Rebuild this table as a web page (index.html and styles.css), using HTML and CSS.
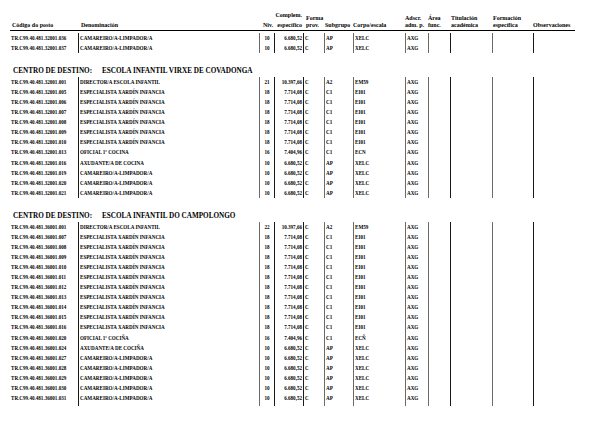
FILE: index.html
```html
<!DOCTYPE html>
<html lang="gl">
<head>
<meta charset="utf-8">
<title>Relación de postos</title>
<link rel="stylesheet" href="styles.css">
</head>
<body>
<div class="page">
  <div class="head">
    <div class="h h1"><span>Código do posto</span></div>
    <div class="h h2"><span>Denominación</span></div>
    <div class="h h3"><span>Niv.</span></div>
    <div class="h h4"><span>Complem.</span><span>específico</span></div>
    <div class="h h5"><span>Forma</span><span>prov.</span></div>
    <div class="h h6"><span>Subgrupo</span></div>
    <div class="h h7"><span>Corpo/escala</span></div>
    <div class="h h8"><span>Adscr.</span><span>adm. p.</span></div>
    <div class="h h9"><span>Área</span><span>func.</span></div>
    <div class="h h10"><span>Titulación</span><span>académica</span></div>
    <div class="h h11"><span>Formación</span><span>específica</span></div>
    <div class="h h12"><span>Observaciones</span></div>
  </div>

  <div class="rows first">
    <div class="row"><div class="c c1">TR.C99.40.481.32001.036</div><div class="c c2">CAMAREIRO/A-LIMPADOR/A</div><div class="c c3">10</div><div class="c c4">6.680,52</div><div class="c c5">C</div><div class="c c6">AP</div><div class="c c7">XELC</div><div class="c c8">AXG</div><div class="c c9"></div><div class="c c10"></div><div class="c c11"></div><div class="c c12"></div></div>
    <div class="row"><div class="c c1">TR.C99.40.481.32001.037</div><div class="c c2">CAMAREIRO/A-LIMPADOR/A</div><div class="c c3">10</div><div class="c c4">6.680,52</div><div class="c c5">C</div><div class="c c6">AP</div><div class="c c7">XELC</div><div class="c c8">AXG</div><div class="c c9"></div><div class="c c10"></div><div class="c c11"></div><div class="c c12"></div></div>
  </div>

  <div class="centre"><span class="lbl">CENTRO DE DESTINO:</span><span>ESCOLA INFANTIL VIRXE DE COVADONGA</span></div>
  <div class="rows">
    <div class="row"><div class="c c1">TR.C99.40.481.32001.001</div><div class="c c2">DIRECTOR/A ESCOLA INFANTIL</div><div class="c c3">21</div><div class="c c4">10.397,66</div><div class="c c5">C</div><div class="c c6">A2</div><div class="c c7">EM59</div><div class="c c8">AXG</div><div class="c c9"></div><div class="c c10"></div><div class="c c11"></div><div class="c c12"></div></div>
    <div class="row"><div class="c c1">TR.C99.40.481.32001.005</div><div class="c c2">ESPECIALISTA XARDÍN INFANCIA</div><div class="c c3">18</div><div class="c c4">7.714,08</div><div class="c c5">C</div><div class="c c6">C1</div><div class="c c7">EI01</div><div class="c c8">AXG</div><div class="c c9"></div><div class="c c10"></div><div class="c c11"></div><div class="c c12"></div></div>
    <div class="row"><div class="c c1">TR.C99.40.481.32001.006</div><div class="c c2">ESPECIALISTA XARDÍN INFANCIA</div><div class="c c3">18</div><div class="c c4">7.714,08</div><div class="c c5">C</div><div class="c c6">C1</div><div class="c c7">EI01</div><div class="c c8">AXG</div><div class="c c9"></div><div class="c c10"></div><div class="c c11"></div><div class="c c12"></div></div>
    <div class="row"><div class="c c1">TR.C99.40.481.32001.007</div><div class="c c2">ESPECIALISTA XARDÍN INFANCIA</div><div class="c c3">18</div><div class="c c4">7.714,08</div><div class="c c5">C</div><div class="c c6">C1</div><div class="c c7">EI01</div><div class="c c8">AXG</div><div class="c c9"></div><div class="c c10"></div><div class="c c11"></div><div class="c c12"></div></div>
    <div class="row"><div class="c c1">TR.C99.40.481.32001.008</div><div class="c c2">ESPECIALISTA XARDÍN INFANCIA</div><div class="c c3">18</div><div class="c c4">7.714,08</div><div class="c c5">C</div><div class="c c6">C1</div><div class="c c7">EI01</div><div class="c c8">AXG</div><div class="c c9"></div><div class="c c10"></div><div class="c c11"></div><div class="c c12"></div></div>
    <div class="row"><div class="c c1">TR.C99.40.481.32001.009</div><div class="c c2">ESPECIALISTA XARDÍN INFANCIA</div><div class="c c3">18</div><div class="c c4">7.714,08</div><div class="c c5">C</div><div class="c c6">C1</div><div class="c c7">EI01</div><div class="c c8">AXG</div><div class="c c9"></div><div class="c c10"></div><div class="c c11"></div><div class="c c12"></div></div>
    <div class="row"><div class="c c1">TR.C99.40.481.32001.010</div><div class="c c2">ESPECIALISTA XARDÍN INFANCIA</div><div class="c c3">18</div><div class="c c4">7.714,08</div><div class="c c5">C</div><div class="c c6">C1</div><div class="c c7">EI01</div><div class="c c8">AXG</div><div class="c c9"></div><div class="c c10"></div><div class="c c11"></div><div class="c c12"></div></div>
    <div class="row"><div class="c c1">TR.C99.40.481.32001.013</div><div class="c c2">OFICIAL 1ª COCINA</div><div class="c c3">16</div><div class="c c4">7.404,96</div><div class="c c5">C</div><div class="c c6">C1</div><div class="c c7">ECN</div><div class="c c8">AXG</div><div class="c c9"></div><div class="c c10"></div><div class="c c11"></div><div class="c c12"></div></div>
    <div class="row"><div class="c c1">TR.C99.40.481.32001.016</div><div class="c c2">AXUDANTE/A DE COCINA</div><div class="c c3">10</div><div class="c c4">6.680,52</div><div class="c c5">C</div><div class="c c6">AP</div><div class="c c7">XELC</div><div class="c c8">AXG</div><div class="c c9"></div><div class="c c10"></div><div class="c c11"></div><div class="c c12"></div></div>
    <div class="row"><div class="c c1">TR.C99.40.481.32001.019</div><div class="c c2">CAMAREIRO/A-LIMPADOR/A</div><div class="c c3">10</div><div class="c c4">6.680,52</div><div class="c c5">C</div><div class="c c6">AP</div><div class="c c7">XELC</div><div class="c c8">AXG</div><div class="c c9"></div><div class="c c10"></div><div class="c c11"></div><div class="c c12"></div></div>
    <div class="row"><div class="c c1">TR.C99.40.481.32001.020</div><div class="c c2">CAMAREIRO/A-LIMPADOR/A</div><div class="c c3">10</div><div class="c c4">6.680,52</div><div class="c c5">C</div><div class="c c6">AP</div><div class="c c7">XELC</div><div class="c c8">AXG</div><div class="c c9"></div><div class="c c10"></div><div class="c c11"></div><div class="c c12"></div></div>
    <div class="row"><div class="c c1">TR.C99.40.481.32001.021</div><div class="c c2">CAMAREIRO/A-LIMPADOR/A</div><div class="c c3">10</div><div class="c c4">6.680,52</div><div class="c c5">C</div><div class="c c6">AP</div><div class="c c7">XELC</div><div class="c c8">AXG</div><div class="c c9"></div><div class="c c10"></div><div class="c c11"></div><div class="c c12"></div></div>
  </div>

  <div class="centre"><span class="lbl">CENTRO DE DESTINO:</span><span>ESCOLA INFANTIL DO CAMPOLONGO</span></div>
  <div class="rows last">
    <div class="row"><div class="c c1">TR.C99.40.481.36001.001</div><div class="c c2">DIRECTOR/A ESCOLA INFANTIL</div><div class="c c3">22</div><div class="c c4">10.397,66</div><div class="c c5">C</div><div class="c c6">A2</div><div class="c c7">EM59</div><div class="c c8">AXG</div><div class="c c9"></div><div class="c c10"></div><div class="c c11"></div><div class="c c12"></div></div>
    <div class="row"><div class="c c1">TR.C99.40.481.36001.007</div><div class="c c2">ESPECIALISTA XARDÍN INFANCIA</div><div class="c c3">18</div><div class="c c4">7.714,08</div><div class="c c5">C</div><div class="c c6">C1</div><div class="c c7">EI01</div><div class="c c8">AXG</div><div class="c c9"></div><div class="c c10"></div><div class="c c11"></div><div class="c c12"></div></div>
    <div class="row"><div class="c c1">TR.C99.40.481.36001.008</div><div class="c c2">ESPECIALISTA XARDÍN INFANCIA</div><div class="c c3">18</div><div class="c c4">7.714,08</div><div class="c c5">C</div><div class="c c6">C1</div><div class="c c7">EI01</div><div class="c c8">AXG</div><div class="c c9"></div><div class="c c10"></div><div class="c c11"></div><div class="c c12"></div></div>
    <div class="row"><div class="c c1">TR.C99.40.481.36001.009</div><div class="c c2">ESPECIALISTA XARDÍN INFANCIA</div><div class="c c3">18</div><div class="c c4">7.714,08</div><div class="c c5">C</div><div class="c c6">C1</div><div class="c c7">EI01</div><div class="c c8">AXG</div><div class="c c9"></div><div class="c c10"></div><div class="c c11"></div><div class="c c12"></div></div>
    <div class="row"><div class="c c1">TR.C99.40.481.36001.010</div><div class="c c2">ESPECIALISTA XARDÍN INFANCIA</div><div class="c c3">18</div><div class="c c4">7.714,08</div><div class="c c5">C</div><div class="c c6">C1</div><div class="c c7">EI01</div><div class="c c8">AXG</div><div class="c c9"></div><div class="c c10"></div><div class="c c11"></div><div class="c c12"></div></div>
    <div class="row"><div class="c c1">TR.C99.40.481.36001.011</div><div class="c c2">ESPECIALISTA XARDÍN INFANCIA</div><div class="c c3">18</div><div class="c c4">7.714,08</div><div class="c c5">C</div><div class="c c6">C1</div><div class="c c7">EI01</div><div class="c c8">AXG</div><div class="c c9"></div><div class="c c10"></div><div class="c c11"></div><div class="c c12"></div></div>
    <div class="row"><div class="c c1">TR.C99.40.481.36001.012</div><div class="c c2">ESPECIALISTA XARDÍN INFANCIA</div><div class="c c3">18</div><div class="c c4">7.714,08</div><div class="c c5">C</div><div class="c c6">C1</div><div class="c c7">EI01</div><div class="c c8">AXG</div><div class="c c9"></div><div class="c c10"></div><div class="c c11"></div><div class="c c12"></div></div>
    <div class="row"><div class="c c1">TR.C99.40.481.36001.013</div><div class="c c2">ESPECIALISTA XARDÍN INFANCIA</div><div class="c c3">18</div><div class="c c4">7.714,08</div><div class="c c5">C</div><div class="c c6">C1</div><div class="c c7">EI01</div><div class="c c8">AXG</div><div class="c c9"></div><div class="c c10"></div><div class="c c11"></div><div class="c c12"></div></div>
    <div class="row"><div class="c c1">TR.C99.40.481.36001.014</div><div class="c c2">ESPECIALISTA XARDÍN INFANCIA</div><div class="c c3">18</div><div class="c c4">7.714,08</div><div class="c c5">C</div><div class="c c6">C1</div><div class="c c7">EI01</div><div class="c c8">AXG</div><div class="c c9"></div><div class="c c10"></div><div class="c c11"></div><div class="c c12"></div></div>
    <div class="row"><div class="c c1">TR.C99.40.481.36001.015</div><div class="c c2">ESPECIALISTA XARDÍN INFANCIA</div><div class="c c3">18</div><div class="c c4">7.714,08</div><div class="c c5">C</div><div class="c c6">C1</div><div class="c c7">EI01</div><div class="c c8">AXG</div><div class="c c9"></div><div class="c c10"></div><div class="c c11"></div><div class="c c12"></div></div>
    <div class="row"><div class="c c1">TR.C99.40.481.36001.016</div><div class="c c2">ESPECIALISTA XARDÍN INFANCIA</div><div class="c c3">18</div><div class="c c4">7.714,08</div><div class="c c5">C</div><div class="c c6">C1</div><div class="c c7">EI01</div><div class="c c8">AXG</div><div class="c c9"></div><div class="c c10"></div><div class="c c11"></div><div class="c c12"></div></div>
    <div class="row"><div class="c c1">TR.C99.40.481.36001.020</div><div class="c c2">OFICIAL 1ª COCIÑA</div><div class="c c3">16</div><div class="c c4">7.404,96</div><div class="c c5">C</div><div class="c c6">C1</div><div class="c c7">ECÑ</div><div class="c c8">AXG</div><div class="c c9"></div><div class="c c10"></div><div class="c c11"></div><div class="c c12"></div></div>
    <div class="row"><div class="c c1">TR.C99.40.481.36001.024</div><div class="c c2">AXUDANTE/A DE COCIÑA</div><div class="c c3">10</div><div class="c c4">6.680,52</div><div class="c c5">C</div><div class="c c6">AP</div><div class="c c7">XELC</div><div class="c c8">AXG</div><div class="c c9"></div><div class="c c10"></div><div class="c c11"></div><div class="c c12"></div></div>
    <div class="row"><div class="c c1">TR.C99.40.481.36001.027</div><div class="c c2">CAMAREIRO/A-LIMPADOR/A</div><div class="c c3">10</div><div class="c c4">6.680,52</div><div class="c c5">C</div><div class="c c6">AP</div><div class="c c7">XELC</div><div class="c c8">AXG</div><div class="c c9"></div><div class="c c10"></div><div class="c c11"></div><div class="c c12"></div></div>
    <div class="row"><div class="c c1">TR.C99.40.481.36001.028</div><div class="c c2">CAMAREIRO/A-LIMPADOR/A</div><div class="c c3">10</div><div class="c c4">6.680,52</div><div class="c c5">C</div><div class="c c6">AP</div><div class="c c7">XELC</div><div class="c c8">AXG</div><div class="c c9"></div><div class="c c10"></div><div class="c c11"></div><div class="c c12"></div></div>
    <div class="row"><div class="c c1">TR.C99.40.481.36001.029</div><div class="c c2">CAMAREIRO/A-LIMPADOR/A</div><div class="c c3">10</div><div class="c c4">6.680,52</div><div class="c c5">C</div><div class="c c6">AP</div><div class="c c7">XELC</div><div class="c c8">AXG</div><div class="c c9"></div><div class="c c10"></div><div class="c c11"></div><div class="c c12"></div></div>
    <div class="row"><div class="c c1">TR.C99.40.481.36001.030</div><div class="c c2">CAMAREIRO/A-LIMPADOR/A</div><div class="c c3">10</div><div class="c c4">6.680,52</div><div class="c c5">C</div><div class="c c6">AP</div><div class="c c7">XELC</div><div class="c c8">AXG</div><div class="c c9"></div><div class="c c10"></div><div class="c c11"></div><div class="c c12"></div></div>
    <div class="row"><div class="c c1">TR.C99.40.481.36001.031</div><div class="c c2">CAMAREIRO/A-LIMPADOR/A</div><div class="c c3">10</div><div class="c c4">6.680,52</div><div class="c c5">C</div><div class="c c6">AP</div><div class="c c7">XELC</div><div class="c c8">AXG</div><div class="c c9"></div><div class="c c10"></div><div class="c c11"></div><div class="c c12"></div></div>
    <div class="row tail"><div class="c c1"></div><div class="c c2"></div><div class="c c3"></div><div class="c c4"></div><div class="c c5"></div><div class="c c6"></div><div class="c c7"></div><div class="c c8"></div><div class="c c9"></div><div class="c c10"></div><div class="c c11"></div><div class="c c12"></div></div>
  </div>
</div>
</body>
</html>
```

FILE: styles.css
```css
html, body {
  margin: 0;
  padding: 0;
  background: #ffffff;
}

.page {
  padding: 12px 0 0 10px;
  font-family: "Liberation Serif", "Times New Roman", serif;
  font-weight: bold;
  color: #000;
  width: 593px;
}

/* header */
.head {
  display: grid;
  grid-template-columns: 68px 181px 15px 29px 21px 29px 52px 23px 22px 42px 41px 42px;
  height: 18px;
  border-bottom: 1px solid #000;
  width: 565px;
  box-sizing: content-box;
}

.h {
  display: flex;
  flex-direction: column;
  justify-content: flex-end;
  padding-bottom: 1px;
  font-size: 6px;
  line-height: 7px;
  white-space: nowrap;
}

.h1 { padding-left: 2px; }
.h2 { padding-left: 3px; }
.h3 { padding-left: 4px; }
.h4 { align-items: flex-end; padding-right: 1px; gap: 3px; }
.h5 { padding-left: 3px; }
.h6 { padding-left: 1px; }
.h7 { padding-left: 0; }
.h8 { padding-left: 0; }
.h9 { padding-left: 0; }
.h10 { padding-left: 1px; }
.h11 { padding-left: 1px; }
.h12 { padding-left: 0; }

/* data rows */
.rows { margin-top: 0; }
.rows.first { margin-top: 2px; }

.row {
  display: grid;
  grid-template-columns: 68px 181px 15px 29px 21px 29px 52px 23px 22px 42px 41px 70px;
  height: 10.1px;
  line-height: 10.1px;
  font-size: 5.1px;
  white-space: nowrap;
}

.row.tail { height: 2.5px; }

.c {
  box-sizing: border-box;
  overflow: visible;
}

.c1 { padding-left: 1px; }
.c2 { border-left: 1px solid #1a1a1a; padding-left: 1px; }
.c3 { border-left: 1px solid #6a6a6a; text-align: center; }
.c4 { border-left: 1px solid #1a1a1a; text-align: right; padding-right: 1px; }
.c5 { border-left: 1px solid #1a1a1a; padding-left: 1px; }
.c6 { border-left: 1px solid #6a6a6a; padding-left: 1px; }
.c7 { border-left: 1px solid #6a6a6a; padding-left: 1px; }
.c8 { border-left: 1px solid #6a6a6a; padding-left: 1px; }
.c9 { border-left: 1px solid #6a6a6a; }
.c10 { border-left: 1px solid #1a1a1a; }
.c11 { border-left: 1px solid #6a6a6a; }
.c12 { border-left: 1px solid #1a1a1a; }

/* centre titles */
.centre {
  margin: 13.6px 0 1px 3px;
  height: 9px;
  line-height: 9px;
  font-size: 7.2px;
  white-space: nowrap;
}

.centre .lbl {
  display: inline-block;
  width: 89px;
}
```
